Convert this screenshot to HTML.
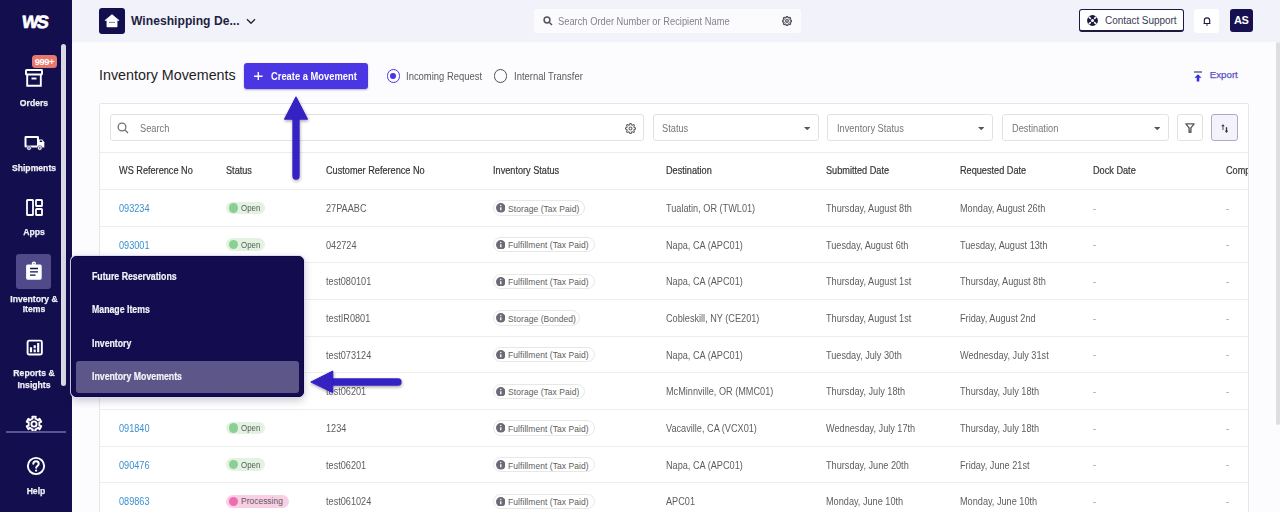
<!DOCTYPE html>
<html><head><meta charset="utf-8">
<style>
*{margin:0;padding:0;box-sizing:border-box}
html,body{width:1280px;height:512px;overflow:hidden;background:#fcfbfe;font-family:"Liberation Sans",sans-serif}
.a{position:absolute}
.t{position:absolute;line-height:1;white-space:nowrap}
.sl{color:#f2f1f7;font-weight:bold;letter-spacing:0;transform:scaleX(0.9);transform-origin:50% 0;-webkit-text-stroke:0.25px #f2f1f7;text-align:center;width:68px;left:0}
.th{color:#363636;letter-spacing:0;transform:scaleX(0.915);transform-origin:0 0;-webkit-text-stroke:0.2px #363636}
.td{color:#5e5e5e;letter-spacing:0;transform:scaleX(0.915);transform-origin:0 0}
.lnk{color:#3b90d0;letter-spacing:0}
.sel{border:1.2px solid #e2e2e2;border-radius:3px;background:#fff;height:26.9px;top:114.4px}
.ph{color:#777;letter-spacing:0;transform:scaleX(0.925);transform-origin:0 0}
.chip{height:12.9px;border-radius:7px}
.ct{font-size:7.9px;color:#595959}
.inv{height:15.2px;border:1px solid #e7e7e7;border-radius:8px;background:#fff}
.ii{width:9.6px;height:9.6px;border-radius:50%;background:#6b6a76}
.fm{color:#f4f3f9;font-weight:bold;letter-spacing:0;transform:scaleX(0.875);transform-origin:0 0;-webkit-text-stroke:0.2px #f4f3f9}
.hl{background:#ededed;height:1.2px}
</style></head><body>
<div class="a" style="left:0;top:0;width:72px;height:512px;background:#130f4e"></div>
<div class="a" style="left:61px;top:44px;width:4.6px;height:342px;background:#d9d8e4;border-radius:3px"></div>
<div class="t" style="left:22.3px;top:14.1px;font-size:17.8px;font-weight:bold;color:#fff;letter-spacing:-1.9px;transform:skewX(-7deg);-webkit-text-stroke:0.7px #fff">WS</div>
<svg class="a" style="left:25px;top:69px" width="18" height="18" viewBox="0 0 18 18" fill="none" stroke="#fff" stroke-width="1.9"><rect x="1" y="1" width="16" height="4.5" rx="0.5"/><path d="M2.2 5.5V16.8H15.8V5.5"/><path d="M6.5 9.5H11.5"/></svg>
<div class="a" style="left:31.8px;top:55px;width:24.9px;height:13.2px;background:#e6786e;border-radius:3.5px"></div>
<div class="t " style="left:31.80px;top:57.27px;font-size:9.4px;color:#fff;font-weight:bold;letter-spacing:-0.45px;width:25.4px;text-align:center">999+</div>
<div class="t sl" style="left:0.00px;top:98.47px;font-size:9.6px">Orders</div>
<svg class="a" style="left:23.5px;top:134.5px" width="21" height="16" viewBox="0 0 21 16"><rect x="1.5" y="1.9" width="12.5" height="9.7" fill="none" stroke="#fff" stroke-width="2" rx="0.4"/><path d="M14.6 4.4H18.3L20.3 7.3V12.6H14.6Z" fill="#fff"/><rect x="15.8" y="5.5" width="2.4" height="1.5" fill="#130f4e"/><circle cx="5" cy="13" r="2.3" fill="#fff" stroke="#130f4e" stroke-width="0.6"/><circle cx="15.8" cy="13" r="2.3" fill="#fff" stroke="#130f4e" stroke-width="0.6"/><circle cx="5" cy="13" r="0.8" fill="#130f4e"/><circle cx="15.8" cy="13" r="0.8" fill="#130f4e"/></svg>
<div class="t sl" style="left:0.00px;top:163.17px;font-size:9.6px">Shipments</div>
<svg class="a" style="left:25.5px;top:199px" width="17" height="17" viewBox="0 0 17 17" fill="none" stroke="#fff" stroke-width="1.8"><rect x="1" y="1" width="6" height="15" rx="0.6"/><rect x="10" y="1" width="6" height="6" rx="0.6"/><rect x="10" y="10" width="6" height="6" rx="0.6"/></svg>
<div class="t sl" style="left:0.00px;top:226.67px;font-size:9.6px">Apps</div>
<div class="a" style="left:16.3px;top:254.3px;width:35.2px;height:34.4px;background:#514a8a;border-radius:3px"></div>
<svg class="a" style="left:25px;top:261px" width="18" height="20" viewBox="0 0 18 20"><rect x="1.1" y="3.5" width="15.6" height="15.2" rx="1.6" fill="#fff"/><circle cx="8.9" cy="2.6" r="2.1" fill="#fff"/><circle cx="8.9" cy="2.6" r="0.6" fill="#514a8a"/><path d="M5 7.5H13M5 10.8H13M5 14.2H10.5" stroke="#15104d" stroke-width="1.3"/></svg>
<div class="t sl" style="left:0.00px;top:293.67px;font-size:9.6px">Inventory &amp;</div>
<div class="t sl" style="left:0.00px;top:304.17px;font-size:9.6px">Items</div>
<svg class="a" style="left:25.5px;top:339.2px" width="17" height="17" viewBox="0 0 17 17" fill="none" stroke="#fff"><rect x="1.6" y="1.65" width="14.25" height="13.9" rx="1.5" stroke-width="1.9"/><path d="M5 8.3V13.3M12.2 3.9V13.3" stroke-width="2.2"/><path d="M8.7 6.3V9.2M8.7 10.4V13.3" stroke-width="2.2"/></svg>
<div class="t sl" style="left:0.00px;top:367.97px;font-size:9.6px">Reports &amp;</div>
<div class="t sl" style="left:0.00px;top:379.67px;font-size:9.6px">Insights</div>
<svg class="a" style="left:23.8px;top:413.5px" width="20" height="20" viewBox="0 0 20 20" fill="none" stroke="#fff" stroke-width="1.9" stroke-linejoin="round"><path d="M8.29 2.59 L11.71 2.59 L11.26 4.54 L14.10 6.18 L15.56 4.82 L17.27 7.78 L15.36 8.36 L15.36 11.64 L17.27 12.22 L15.56 15.18 L14.10 13.82 L11.26 15.46 L11.71 17.41 L8.29 17.41 L8.74 15.46 L5.90 13.82 L4.44 15.18 L2.73 12.22 L4.64 11.64 L4.64 8.36 L2.73 7.78 L4.44 4.82 L5.90 6.18 L8.74 4.54Z"/><circle cx="10" cy="10" r="2.6"/></svg>
<div class="a" style="left:6px;top:430.8px;width:59.6px;height:2.4px;background:#5a5497"></div>
<svg class="a" style="left:25.85px;top:456.1px" width="20" height="20" viewBox="0 0 20 20" fill="none" stroke="#fff" stroke-width="1.9"><circle cx="10" cy="10" r="8.15"/><path d="M7.3 7.8a2.7 2.7 0 0 1 5.4 0.3c0 1.7-2.5 2.1-2.5 3.6" stroke-linecap="round" stroke-width="2"/><circle cx="10.1" cy="14.6" r="0.5" fill="#fff" stroke-width="1.3"/></svg>
<div class="t sl" style="left:0.00px;top:486.07px;font-size:9.6px;width:72px">Help</div>
<div class="a" style="left:72px;top:0;width:1208px;height:41.7px;background:#f2f2fb"></div>
<div class="a" style="left:99px;top:8px;width:26px;height:26px;background:#130f4e;border-radius:3px"></div>
<svg class="a" style="left:104px;top:13px" width="16" height="16" viewBox="0 0 16 16"><path d="M0.9 7.4L8 1.6L15.1 7.4H13.1V13.9H2.9V7.4Z" fill="#fff" stroke="#fff" stroke-width="0.6" stroke-linejoin="round"/><circle cx="5.9" cy="9.3" r="0.65" fill="#130f4e"/><circle cx="8" cy="9.3" r="0.65" fill="#130f4e"/><circle cx="10.1" cy="9.3" r="0.65" fill="#130f4e"/></svg>
<div class="t " style="left:131.00px;top:15.17px;font-size:12.1px;font-weight:bold;color:#221f42;letter-spacing:0.03px">Wineshipping De...</div>
<svg class="a" style="left:246px;top:17.5px" width="10" height="7" viewBox="0 0 10 7" fill="none" stroke="#2a2840" stroke-width="1.4"><path d="M1 1.2L5 5.2L9 1.2"/></svg>
<div class="a" style="left:534.4px;top:8.9px;width:266.5px;height:24.1px;background:#fbfbfe;border-radius:3px"></div>
<svg class="a" style="left:542.5px;top:15.5px" width="10" height="10" viewBox="0 0 10 10" fill="none" stroke="#55555f" stroke-width="1.5"><circle cx="4" cy="4" r="2.9"/><path d="M6.2 6.2L9 9"/></svg>
<div class="t " style="left:558.00px;top:16.68px;font-size:10.0px;color:#83838d;transform:scaleX(0.933);transform-origin:0 0">Search Order Number or Recipient Name</div>
<svg class="a" style="left:782px;top:15.8px" width="10" height="10" viewBox="0 0 24 24" fill="none" stroke="#55555f" stroke-width="3"><circle cx="12" cy="12" r="3.2"/><path d="M19.4 15a1.7 1.7 0 0 0 .3 1.8l.1.1a2 2 0 1 1-2.8 2.8l-.1-.1a1.7 1.7 0 0 0-1.8-.3 1.7 1.7 0 0 0-1 1.5V21a2 2 0 1 1-4 0v-.1a1.7 1.7 0 0 0-1.1-1.5 1.7 1.7 0 0 0-1.8.3l-.1.1a2 2 0 1 1-2.8-2.8l.1-.1a1.7 1.7 0 0 0 .3-1.8 1.7 1.7 0 0 0-1.5-1H3a2 2 0 1 1 0-4h.1a1.7 1.7 0 0 0 1.5-1.1 1.7 1.7 0 0 0-.3-1.8l-.1-.1a2 2 0 1 1 2.8-2.8l.1.1a1.7 1.7 0 0 0 1.8.3H9a1.7 1.7 0 0 0 1-1.5V3a2 2 0 1 1 4 0v.1a1.7 1.7 0 0 0 1 1.5 1.7 1.7 0 0 0 1.8-.3l.1-.1a2 2 0 1 1 2.8 2.8l-.1.1a1.7 1.7 0 0 0-.3 1.8V9a1.7 1.7 0 0 0 1.5 1H21a2 2 0 1 1 0 4h-.1a1.7 1.7 0 0 0-1.5 1z"/></svg>
<div class="a" style="left:1079px;top:9px;width:104.7px;height:23.2px;background:#fff;border:1.4px solid #1c1a40;border-bottom-width:2px;border-radius:3px"></div>
<svg class="a" style="left:1087.1px;top:15.3px" width="11" height="11" viewBox="0 0 11 11"><circle cx="5.5" cy="5.5" r="5.4" fill="#1c1a40"/><circle cx="5.5" cy="5.5" r="1.5" fill="#fff"/><path d="M3.4 3.4L2.2 2.2M7.6 3.4L8.8 2.2M3.4 7.6L2.2 8.8M7.6 7.6L8.8 8.8" stroke="#fff" stroke-width="1.5" stroke-linecap="round"/></svg>
<div class="t " style="left:1105.00px;top:16.38px;font-size:10.0px;color:#3b3a56;letter-spacing:-0.05px">Contact Support</div>
<div class="a" style="left:1194.4px;top:9px;width:24.4px;height:23.5px;background:#fff;border-radius:3px"></div>
<svg class="a" style="left:1202.5px;top:16.3px" width="8" height="10" viewBox="0 0 8 10" fill="none" stroke="#1c1a40" stroke-width="1.1"><path d="M1.3 7.4V4.6a2.7 2.7 0 0 1 5.4 0v2.8M0.6 7.5H7.4"/><path d="M3.1 9H4.9" stroke-width="1.1"/></svg>
<div class="a" style="left:1229.6px;top:9px;width:23.4px;height:23.3px;background:#160f50;border-radius:3px"></div>
<div class="t " style="left:1229.60px;top:15.30px;font-size:11px;width:23.4px;text-align:center;font-weight:bold;color:#fff;letter-spacing:-0.3px">AS</div>
<div class="a" style="left:1275.7px;top:41.7px;width:4.3px;height:383.5px;background:#dedede;border-radius:3px"></div>
<div class="t " style="left:99.00px;top:68.46px;font-size:14.3px;color:#1d1d1f">Inventory Movements</div>
<div class="a" style="left:244.2px;top:62.9px;width:123.6px;height:26px;background:#4a36e3;border-radius:3px;box-shadow:0 1px 2px rgba(40,30,120,.35)"></div>
<svg class="a" style="left:254.2px;top:71.6px" width="8.6" height="8.6" viewBox="0 0 8.6 8.6" stroke="#fff" stroke-width="1.4"><path d="M4.3 0V8.6M0 4.3H8.6"/></svg>
<div class="t " style="left:271.00px;top:71.58px;font-size:10.0px;font-weight:bold;color:#fff;transform:scaleX(0.936);transform-origin:0 0">Create a Movement</div>
<div class="a" style="left:386.5px;top:69px;width:13.6px;height:13.6px;border:1.7px solid #4a36e3;border-radius:50%"></div>
<div class="a" style="left:390.4px;top:72.9px;width:5.8px;height:5.8px;background:#4a36e3;border-radius:50%"></div>
<div class="t " style="left:406.20px;top:71.78px;font-size:10.0px;color:#5a5a5a;transform:scaleX(0.945);transform-origin:0 0">Incoming Request</div>
<div class="a" style="left:493.7px;top:69px;width:13.6px;height:13.6px;border:1.7px solid #505050;border-radius:50%"></div>
<div class="t " style="left:514.10px;top:71.78px;font-size:10.0px;color:#5a5a5a;transform:scaleX(0.945);transform-origin:0 0">Internal Transfer</div>
<div class="a" style="left:1193.9px;top:71px;width:8px;height:1.6px;background:#8c8a9c"></div>
<svg class="a" style="left:1194px;top:73.5px" width="8" height="8" viewBox="0 0 8 8"><path d="M4 0.3L7.6 3.8H5.3V7.6H2.7V3.8H0.4Z" fill="#3d2ee0"/></svg>
<div class="t " style="left:1209.80px;top:69.92px;font-size:9.7px;color:#5d52c4;letter-spacing:0px;-webkit-text-stroke:0.25px #5d52c4">Export</div>
<div class="a" style="left:98.7px;top:103px;width:1150.5px;height:420px;background:#fff;border:1.2px solid #e7e7ea;border-radius:2px"></div>
<div class="a sel" style="left:110px;width:534px"></div>
<svg class="a" style="left:116.6px;top:121.6px" width="12" height="12" viewBox="0 0 12 12" fill="none" stroke="#707070" stroke-width="1.3"><circle cx="5" cy="5" r="3.9"/><path d="M7.9 7.9L11 11"/></svg>
<div class="t ph" style="left:139.50px;top:124.18px;font-size:10.0px">Search</div>
<svg class="a" style="left:624.5px;top:122.5px" width="11" height="11" viewBox="0 0 24 24" fill="none" stroke="#666" stroke-width="2.4"><circle cx="12" cy="12" r="3.2"/><path d="M19.4 15a1.7 1.7 0 0 0 .3 1.8l.1.1a2 2 0 1 1-2.8 2.8l-.1-.1a1.7 1.7 0 0 0-1.8-.3 1.7 1.7 0 0 0-1 1.5V21a2 2 0 1 1-4 0v-.1a1.7 1.7 0 0 0-1.1-1.5 1.7 1.7 0 0 0-1.8.3l-.1.1a2 2 0 1 1-2.8-2.8l.1-.1a1.7 1.7 0 0 0 .3-1.8 1.7 1.7 0 0 0-1.5-1H3a2 2 0 1 1 0-4h.1a1.7 1.7 0 0 0 1.5-1.1 1.7 1.7 0 0 0-.3-1.8l-.1-.1a2 2 0 1 1 2.8-2.8l.1.1a1.7 1.7 0 0 0 1.8.3H9a1.7 1.7 0 0 0 1-1.5V3a2 2 0 1 1 4 0v.1a1.7 1.7 0 0 0 1 1.5 1.7 1.7 0 0 0 1.8-.3l.1-.1a2 2 0 1 1 2.8 2.8l-.1.1a1.7 1.7 0 0 0-.3 1.8V9a1.7 1.7 0 0 0 1.5 1H21a2 2 0 1 1 0 4h-.1a1.7 1.7 0 0 0-1.5 1z"/></svg>
<div class="a sel" style="left:652.5px;width:166.7px"></div>
<div class="t ph" style="left:662.30px;top:124.18px;font-size:10.0px">Status</div>
<svg class="a" style="left:803.8px;top:126.6px" width="6.4" height="3.2" viewBox="0 0 6.4 3.2"><path d="M0 0H6.4L3.2 3.2Z" fill="#555"/></svg>
<div class="a sel" style="left:827.2px;width:166.3px"></div>
<div class="t ph" style="left:837.00px;top:124.18px;font-size:10.0px">Inventory Status</div>
<svg class="a" style="left:978.1px;top:126.6px" width="6.4" height="3.2" viewBox="0 0 6.4 3.2"><path d="M0 0H6.4L3.2 3.2Z" fill="#555"/></svg>
<div class="a sel" style="left:1002.2px;width:166.7px"></div>
<div class="t ph" style="left:1012.00px;top:124.18px;font-size:10.0px">Destination</div>
<svg class="a" style="left:1153.5px;top:126.6px" width="6.4" height="3.2" viewBox="0 0 6.4 3.2"><path d="M0 0H6.4L3.2 3.2Z" fill="#555"/></svg>
<div class="a sel" style="left:1176.6px;width:26.8px"></div>
<svg class="a" style="left:1185px;top:123px" width="10" height="10" viewBox="0 0 10 10" fill="none" stroke="#5a5a5a" stroke-width="1.4" stroke-linejoin="round"><path d="M0.9 0.9H9.1L5.9 4.9V9.3H4.1V4.9Z"/></svg>
<div class="a sel" style="left:1211.1px;width:26.8px;background:#f4f3fc;border:1.4px solid #aca8d2"></div>
<svg class="a" style="left:1220px;top:122.5px" width="10" height="11" viewBox="0 0 10 11"><path d="M3 7V2.5" stroke="#6f7296" stroke-width="1.3"/><path d="M1.3 3.3L3 1.2L4.7 3.3Z" fill="#2c2a48"/><path d="M6.5 4.2V8.2" stroke="#2c2a48" stroke-width="1.3"/><path d="M4.8 7.8L6.5 10L8.2 7.8Z" fill="#2c2a48"/></svg>
<div class="a hl" style="left:100px;top:152px;width:1148px"></div>
<div class="a" style="left:100px;top:153px;width:1148px;height:360px;overflow:hidden">
<div class="t th" style="left:19.40px;top:13.38px;font-size:10.0px">WS Reference No</div>
<div class="t th" style="left:126.00px;top:13.38px;font-size:10.0px">Status</div>
<div class="t th" style="left:226.00px;top:13.38px;font-size:10.0px">Customer Reference No</div>
<div class="t th" style="left:392.70px;top:13.38px;font-size:10.0px">Inventory Status</div>
<div class="t th" style="left:566.30px;top:13.38px;font-size:10.0px">Destination</div>
<div class="t th" style="left:726.40px;top:13.38px;font-size:10.0px">Submitted Date</div>
<div class="t th" style="left:859.50px;top:13.38px;font-size:10.0px">Requested Date</div>
<div class="t th" style="left:993.00px;top:13.38px;font-size:10.0px">Dock Date</div>
<div class="t th" style="left:1126.00px;top:13.38px;font-size:10.0px">Comp</div>
<div class="a hl" style="left:0;top:35.85px;width:1148px"></div>
<div class="t td lnk" style="left:19.40px;top:50.93px;font-size:10.0px">093234</div>
<div class="a chip" style="left:126.4px;top:48.50px;width:38.7px;background:#e2f3e2"></div>
<div class="a" style="left:128.8px;top:50.30px;width:9.3px;height:9.3px;border-radius:50%;background:#8bcf92"></div>
<div class="t ct" style="left:141.00px;top:50.90px;font-size:8.4px;transform:scaleX(0.944);transform-origin:0 0">Open</div>
<div class="t td" style="left:226.00px;top:50.93px;font-size:10.0px">27PAABC</div>
<div class="a inv" style="left:392.7px;top:47.35px;width:91.9px"></div>
<svg class="a" style="left:395.6px;top:50.15px" width="9.6" height="9.6" viewBox="0 0 10 10"><circle cx="5" cy="5" r="5" fill="#6b6a76"/><path d="M5 4.3V7.6" stroke="#fff" stroke-width="1.4"/><circle cx="5" cy="2.7" r="0.75" fill="#fff"/></svg>
<div class="t ct" style="left:408.10px;top:51.75px;font-size:8.5px;color:#606060;letter-spacing:0.05px">Storage (Tax Paid)</div>
<div class="t td" style="left:566.30px;top:50.93px;font-size:10.0px">Tualatin, OR (TWL01)</div>
<div class="t td" style="left:726.40px;top:50.93px;font-size:10.0px">Thursday, August 8th</div>
<div class="t td" style="left:859.50px;top:50.93px;font-size:10.0px">Monday, August 26th</div>
<div class="t td" style="left:993.00px;top:50.53px;font-size:10.0px;color:#9c9c9c">-</div>
<div class="t td" style="left:1126.00px;top:50.53px;font-size:10.0px;color:#9c9c9c">-</div>
<div class="a hl" style="left:0;top:72.53px;width:1148px"></div>
<div class="t td lnk" style="left:19.40px;top:87.61px;font-size:10.0px">093001</div>
<div class="a chip" style="left:126.4px;top:85.18px;width:38.7px;background:#e2f3e2"></div>
<div class="a" style="left:128.8px;top:86.98px;width:9.3px;height:9.3px;border-radius:50%;background:#8bcf92"></div>
<div class="t ct" style="left:141.00px;top:87.58px;font-size:8.4px;transform:scaleX(0.944);transform-origin:0 0">Open</div>
<div class="t td" style="left:226.00px;top:87.61px;font-size:10.0px">042724</div>
<div class="a inv" style="left:392.7px;top:84.03px;width:101.9px"></div>
<svg class="a" style="left:395.6px;top:86.83px" width="9.6" height="9.6" viewBox="0 0 10 10"><circle cx="5" cy="5" r="5" fill="#6b6a76"/><path d="M5 4.3V7.6" stroke="#fff" stroke-width="1.4"/><circle cx="5" cy="2.7" r="0.75" fill="#fff"/></svg>
<div class="t ct" style="left:408.10px;top:88.43px;font-size:8.5px;color:#606060;letter-spacing:0.05px">Fulfillment (Tax Paid)</div>
<div class="t td" style="left:566.30px;top:87.61px;font-size:10.0px">Napa, CA (APC01)</div>
<div class="t td" style="left:726.40px;top:87.61px;font-size:10.0px">Tuesday, August 6th</div>
<div class="t td" style="left:859.50px;top:87.61px;font-size:10.0px">Tuesday, August 13th</div>
<div class="t td" style="left:993.00px;top:87.21px;font-size:10.0px;color:#9c9c9c">-</div>
<div class="t td" style="left:1126.00px;top:87.21px;font-size:10.0px;color:#9c9c9c">-</div>
<div class="a hl" style="left:0;top:109.21px;width:1148px"></div>
<div class="t td lnk" style="left:19.40px;top:124.29px;font-size:10.0px">093000</div>
<div class="a chip" style="left:126.4px;top:121.86px;width:38.7px;background:#e2f3e2"></div>
<div class="a" style="left:128.8px;top:123.66px;width:9.3px;height:9.3px;border-radius:50%;background:#8bcf92"></div>
<div class="t ct" style="left:141.00px;top:124.26px;font-size:8.4px;transform:scaleX(0.944);transform-origin:0 0">Open</div>
<div class="t td" style="left:226.00px;top:124.29px;font-size:10.0px">test080101</div>
<div class="a inv" style="left:392.7px;top:120.71px;width:101.9px"></div>
<svg class="a" style="left:395.6px;top:123.51px" width="9.6" height="9.6" viewBox="0 0 10 10"><circle cx="5" cy="5" r="5" fill="#6b6a76"/><path d="M5 4.3V7.6" stroke="#fff" stroke-width="1.4"/><circle cx="5" cy="2.7" r="0.75" fill="#fff"/></svg>
<div class="t ct" style="left:408.10px;top:125.11px;font-size:8.5px;color:#606060;letter-spacing:0.05px">Fulfillment (Tax Paid)</div>
<div class="t td" style="left:566.30px;top:124.29px;font-size:10.0px">Napa, CA (APC01)</div>
<div class="t td" style="left:726.40px;top:124.29px;font-size:10.0px">Thursday, August 1st</div>
<div class="t td" style="left:859.50px;top:124.29px;font-size:10.0px">Thursday, August 8th</div>
<div class="t td" style="left:993.00px;top:123.89px;font-size:10.0px;color:#9c9c9c">-</div>
<div class="t td" style="left:1126.00px;top:123.89px;font-size:10.0px;color:#9c9c9c">-</div>
<div class="a hl" style="left:0;top:145.89px;width:1148px"></div>
<div class="t td lnk" style="left:19.40px;top:160.97px;font-size:10.0px">092999</div>
<div class="a chip" style="left:126.4px;top:158.54px;width:38.7px;background:#e2f3e2"></div>
<div class="a" style="left:128.8px;top:160.34px;width:9.3px;height:9.3px;border-radius:50%;background:#8bcf92"></div>
<div class="t ct" style="left:141.00px;top:160.94px;font-size:8.4px;transform:scaleX(0.944);transform-origin:0 0">Open</div>
<div class="t td" style="left:226.00px;top:160.97px;font-size:10.0px">testIR0801</div>
<div class="a inv" style="left:392.7px;top:157.39px;width:87px"></div>
<svg class="a" style="left:395.6px;top:160.19px" width="9.6" height="9.6" viewBox="0 0 10 10"><circle cx="5" cy="5" r="5" fill="#6b6a76"/><path d="M5 4.3V7.6" stroke="#fff" stroke-width="1.4"/><circle cx="5" cy="2.7" r="0.75" fill="#fff"/></svg>
<div class="t ct" style="left:408.10px;top:161.79px;font-size:8.5px;color:#606060;letter-spacing:0.05px">Storage (Bonded)</div>
<div class="t td" style="left:566.30px;top:160.97px;font-size:10.0px">Cobleskill, NY (CE201)</div>
<div class="t td" style="left:726.40px;top:160.97px;font-size:10.0px">Thursday, August 1st</div>
<div class="t td" style="left:859.50px;top:160.97px;font-size:10.0px">Friday, August 2nd</div>
<div class="t td" style="left:993.00px;top:160.57px;font-size:10.0px;color:#9c9c9c">-</div>
<div class="t td" style="left:1126.00px;top:160.57px;font-size:10.0px;color:#9c9c9c">-</div>
<div class="a hl" style="left:0;top:182.57px;width:1148px"></div>
<div class="t td lnk" style="left:19.40px;top:197.65px;font-size:10.0px">092998</div>
<div class="a chip" style="left:126.4px;top:195.22px;width:38.7px;background:#e2f3e2"></div>
<div class="a" style="left:128.8px;top:197.02px;width:9.3px;height:9.3px;border-radius:50%;background:#8bcf92"></div>
<div class="t ct" style="left:141.00px;top:197.62px;font-size:8.4px;transform:scaleX(0.944);transform-origin:0 0">Open</div>
<div class="t td" style="left:226.00px;top:197.65px;font-size:10.0px">test073124</div>
<div class="a inv" style="left:392.7px;top:194.07px;width:101.9px"></div>
<svg class="a" style="left:395.6px;top:196.87px" width="9.6" height="9.6" viewBox="0 0 10 10"><circle cx="5" cy="5" r="5" fill="#6b6a76"/><path d="M5 4.3V7.6" stroke="#fff" stroke-width="1.4"/><circle cx="5" cy="2.7" r="0.75" fill="#fff"/></svg>
<div class="t ct" style="left:408.10px;top:198.47px;font-size:8.5px;color:#606060;letter-spacing:0.05px">Fulfillment (Tax Paid)</div>
<div class="t td" style="left:566.30px;top:197.65px;font-size:10.0px">Napa, CA (APC01)</div>
<div class="t td" style="left:726.40px;top:197.65px;font-size:10.0px">Tuesday, July 30th</div>
<div class="t td" style="left:859.50px;top:197.65px;font-size:10.0px">Wednesday, July 31st</div>
<div class="t td" style="left:993.00px;top:197.25px;font-size:10.0px;color:#9c9c9c">-</div>
<div class="t td" style="left:1126.00px;top:197.25px;font-size:10.0px;color:#9c9c9c">-</div>
<div class="a hl" style="left:0;top:219.25px;width:1148px"></div>
<div class="t td lnk" style="left:19.40px;top:234.33px;font-size:10.0px">092001</div>
<div class="a chip" style="left:126.4px;top:231.90px;width:38.7px;background:#e2f3e2"></div>
<div class="a" style="left:128.8px;top:233.70px;width:9.3px;height:9.3px;border-radius:50%;background:#8bcf92"></div>
<div class="t ct" style="left:141.00px;top:234.30px;font-size:8.4px;transform:scaleX(0.944);transform-origin:0 0">Open</div>
<div class="t td" style="left:226.00px;top:234.33px;font-size:10.0px">test06201</div>
<div class="a inv" style="left:392.7px;top:230.75px;width:91.9px"></div>
<svg class="a" style="left:395.6px;top:233.55px" width="9.6" height="9.6" viewBox="0 0 10 10"><circle cx="5" cy="5" r="5" fill="#6b6a76"/><path d="M5 4.3V7.6" stroke="#fff" stroke-width="1.4"/><circle cx="5" cy="2.7" r="0.75" fill="#fff"/></svg>
<div class="t ct" style="left:408.10px;top:235.15px;font-size:8.5px;color:#606060;letter-spacing:0.05px">Storage (Tax Paid)</div>
<div class="t td" style="left:566.30px;top:234.33px;font-size:10.0px">McMinnville, OR (MMC01)</div>
<div class="t td" style="left:726.40px;top:234.33px;font-size:10.0px">Thursday, July 18th</div>
<div class="t td" style="left:859.50px;top:234.33px;font-size:10.0px">Thursday, July 18th</div>
<div class="t td" style="left:993.00px;top:233.93px;font-size:10.0px;color:#9c9c9c">-</div>
<div class="t td" style="left:1126.00px;top:233.93px;font-size:10.0px;color:#9c9c9c">-</div>
<div class="a hl" style="left:0;top:255.93px;width:1148px"></div>
<div class="t td lnk" style="left:19.40px;top:271.01px;font-size:10.0px">091840</div>
<div class="a chip" style="left:126.4px;top:268.58px;width:38.7px;background:#e2f3e2"></div>
<div class="a" style="left:128.8px;top:270.38px;width:9.3px;height:9.3px;border-radius:50%;background:#8bcf92"></div>
<div class="t ct" style="left:141.00px;top:270.98px;font-size:8.4px;transform:scaleX(0.944);transform-origin:0 0">Open</div>
<div class="t td" style="left:226.00px;top:271.01px;font-size:10.0px">1234</div>
<div class="a inv" style="left:392.7px;top:267.43px;width:101.9px"></div>
<svg class="a" style="left:395.6px;top:270.23px" width="9.6" height="9.6" viewBox="0 0 10 10"><circle cx="5" cy="5" r="5" fill="#6b6a76"/><path d="M5 4.3V7.6" stroke="#fff" stroke-width="1.4"/><circle cx="5" cy="2.7" r="0.75" fill="#fff"/></svg>
<div class="t ct" style="left:408.10px;top:271.83px;font-size:8.5px;color:#606060;letter-spacing:0.05px">Fulfillment (Tax Paid)</div>
<div class="t td" style="left:566.30px;top:271.01px;font-size:10.0px">Vacaville, CA (VCX01)</div>
<div class="t td" style="left:726.40px;top:271.01px;font-size:10.0px">Wednesday, July 17th</div>
<div class="t td" style="left:859.50px;top:271.01px;font-size:10.0px">Thursday, July 18th</div>
<div class="t td" style="left:993.00px;top:270.61px;font-size:10.0px;color:#9c9c9c">-</div>
<div class="t td" style="left:1126.00px;top:270.61px;font-size:10.0px;color:#9c9c9c">-</div>
<div class="a hl" style="left:0;top:292.61px;width:1148px"></div>
<div class="t td lnk" style="left:19.40px;top:307.69px;font-size:10.0px">090476</div>
<div class="a chip" style="left:126.4px;top:305.26px;width:38.7px;background:#e2f3e2"></div>
<div class="a" style="left:128.8px;top:307.06px;width:9.3px;height:9.3px;border-radius:50%;background:#8bcf92"></div>
<div class="t ct" style="left:141.00px;top:307.66px;font-size:8.4px;transform:scaleX(0.944);transform-origin:0 0">Open</div>
<div class="t td" style="left:226.00px;top:307.69px;font-size:10.0px">test06201</div>
<div class="a inv" style="left:392.7px;top:304.11px;width:101.9px"></div>
<svg class="a" style="left:395.6px;top:306.91px" width="9.6" height="9.6" viewBox="0 0 10 10"><circle cx="5" cy="5" r="5" fill="#6b6a76"/><path d="M5 4.3V7.6" stroke="#fff" stroke-width="1.4"/><circle cx="5" cy="2.7" r="0.75" fill="#fff"/></svg>
<div class="t ct" style="left:408.10px;top:308.51px;font-size:8.5px;color:#606060;letter-spacing:0.05px">Fulfillment (Tax Paid)</div>
<div class="t td" style="left:566.30px;top:307.69px;font-size:10.0px">Napa, CA (APC01)</div>
<div class="t td" style="left:726.40px;top:307.69px;font-size:10.0px">Thursday, June 20th</div>
<div class="t td" style="left:859.50px;top:307.69px;font-size:10.0px">Friday, June 21st</div>
<div class="t td" style="left:993.00px;top:307.29px;font-size:10.0px;color:#9c9c9c">-</div>
<div class="t td" style="left:1126.00px;top:307.29px;font-size:10.0px;color:#9c9c9c">-</div>
<div class="a hl" style="left:0;top:329.29px;width:1148px"></div>
<div class="t td lnk" style="left:19.40px;top:344.37px;font-size:10.0px">089863</div>
<div class="a chip" style="left:126.30000000000001px;top:341.94px;width:62.5px;background:#f9cfe5"></div>
<div class="a" style="left:128.8px;top:343.74px;width:9.3px;height:9.3px;border-radius:50%;background:#f06cb1"></div>
<div class="t ct" style="left:141.00px;top:344.34px;font-size:8.4px;letter-spacing:0.05px">Processing</div>
<div class="t td" style="left:226.00px;top:344.37px;font-size:10.0px">test061024</div>
<div class="a inv" style="left:392.7px;top:340.79px;width:101.9px"></div>
<svg class="a" style="left:395.6px;top:343.59px" width="9.6" height="9.6" viewBox="0 0 10 10"><circle cx="5" cy="5" r="5" fill="#6b6a76"/><path d="M5 4.3V7.6" stroke="#fff" stroke-width="1.4"/><circle cx="5" cy="2.7" r="0.75" fill="#fff"/></svg>
<div class="t ct" style="left:408.10px;top:345.19px;font-size:8.5px;color:#606060;letter-spacing:0.05px">Fulfillment (Tax Paid)</div>
<div class="t td" style="left:566.30px;top:344.37px;font-size:10.0px">APC01</div>
<div class="t td" style="left:726.40px;top:344.37px;font-size:10.0px">Monday, June 10th</div>
<div class="t td" style="left:859.50px;top:344.37px;font-size:10.0px">Monday, June 10th</div>
<div class="t td" style="left:993.00px;top:343.97px;font-size:10.0px;color:#9c9c9c">-</div>
<div class="t td" style="left:1126.00px;top:343.97px;font-size:10.0px;color:#9c9c9c">-</div>
</div>
<div class="a" style="left:1249.2px;top:104px;width:26.8px;height:408px;background:#fcfbfe"></div>
<div class="a" style="left:71px;top:255.6px;width:232.8px;height:141.9px;background:#130d4f;border:1px solid #0b0741;border-radius:5px;box-shadow:0 0 0 1px rgba(220,217,242,.9),0 3px 8px rgba(20,15,60,.25)"></div>
<div class="a" style="left:75.7px;top:360.6px;width:223.6px;height:32.2px;background:#5c5689;border-radius:3px"></div>
<div class="t fm" style="left:91.60px;top:271.88px;font-size:10.0px">Future Reservations</div>
<div class="t fm" style="left:91.60px;top:305.38px;font-size:10.0px">Manage Items</div>
<div class="t fm" style="left:91.60px;top:338.88px;font-size:10.0px">Inventory</div>
<div class="t fm" style="left:91.60px;top:371.68px;font-size:10.0px">Inventory Movements</div>
<svg class="a" style="left:0;top:0;overflow:visible" width="1280" height="512">
<defs><filter id="sh" x="-50%" y="-50%" width="200%" height="200%"><feDropShadow dx="0.5" dy="1.5" stdDeviation="1.4" flood-color="#000" flood-opacity="0.35"/></filter></defs>
<g filter="url(#sh)" fill="#3420c2" stroke="#3420c2">
<path d="M296 111V176" stroke-width="7.3" stroke-linecap="round"/>
<path d="M296 96.8L307.6 119.2H284.4Z" stroke-width="1" stroke-linejoin="round"/>
<path d="M332 382H398" stroke-width="7.3" stroke-linecap="round"/>
<path d="M310.8 382L332.8 371V392.6Z" stroke-width="1" stroke-linejoin="round"/>
</g></svg>
</body></html>
